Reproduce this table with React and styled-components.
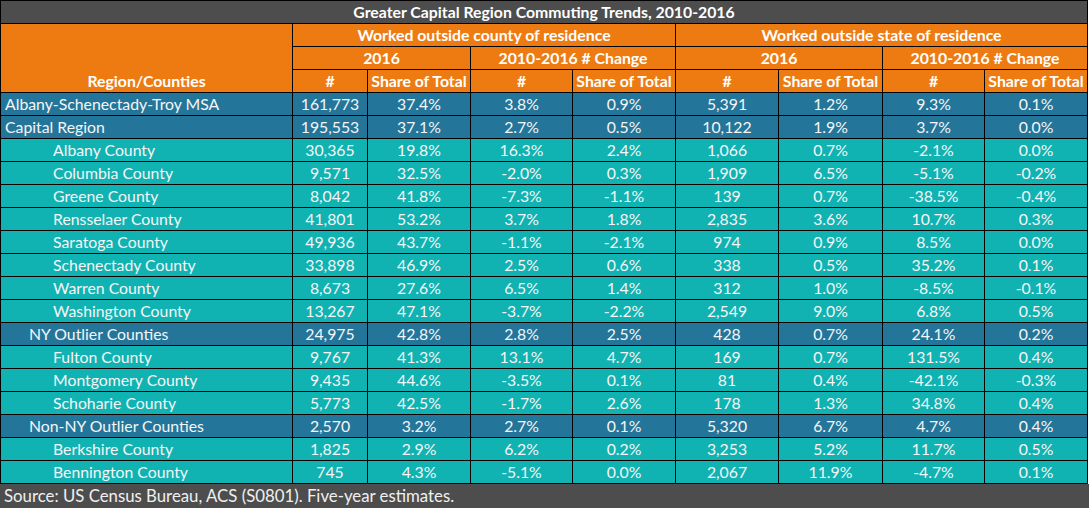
import { createGlobalStyle } from 'styled-components';
import styled from 'styled-components';

const GlobalStyle = createGlobalStyle`
  body {
    margin: 0;
    background: #ffffff;
    font-family: Lato, "Liberation Sans", sans-serif;
  }
`;

const colWidths = [292, 75, 103, 102, 103, 103, 104, 102, 103];

const rows = [
  ['Albany-Schenectady-Troy MSA', 0, '161,773', '37.4%', '3.8%', '0.9%', '5,391', '1.2%', '9.3%', '0.1%'],
  ['Capital Region', 0, '195,553', '37.1%', '2.7%', '0.5%', '10,122', '1.9%', '3.7%', '0.0%'],
  ['Albany County', 2, '30,365', '19.8%', '16.3%', '2.4%', '1,066', '0.7%', '-2.1%', '0.0%'],
  ['Columbia County', 2, '9,571', '32.5%', '-2.0%', '0.3%', '1,909', '6.5%', '-5.1%', '-0.2%'],
  ['Greene County', 2, '8,042', '41.8%', '-7.3%', '-1.1%', '139', '0.7%', '-38.5%', '-0.4%'],
  ['Rensselaer County', 2, '41,801', '53.2%', '3.7%', '1.8%', '2,835', '3.6%', '10.7%', '0.3%'],
  ['Saratoga County', 2, '49,936', '43.7%', '-1.1%', '-2.1%', '974', '0.9%', '8.5%', '0.0%'],
  ['Schenectady County', 2, '33,898', '46.9%', '2.5%', '0.6%', '338', '0.5%', '35.2%', '0.1%'],
  ['Warren County', 2, '8,673', '27.6%', '6.5%', '1.4%', '312', '1.0%', '-8.5%', '-0.1%'],
  ['Washington County', 2, '13,267', '47.1%', '-3.7%', '-2.2%', '2,549', '9.0%', '6.8%', '0.5%'],
  ['NY Outlier Counties', 1, '24,975', '42.8%', '2.8%', '2.5%', '428', '0.7%', '24.1%', '0.2%'],
  ['Fulton County', 2, '9,767', '41.3%', '13.1%', '4.7%', '169', '0.7%', '131.5%', '0.4%'],
  ['Montgomery County', 2, '9,435', '44.6%', '-3.5%', '0.1%', '81', '0.4%', '-42.1%', '-0.3%'],
  ['Schoharie County', 2, '5,773', '42.5%', '-1.7%', '2.6%', '178', '1.3%', '34.8%', '0.4%'],
  ['Non-NY Outlier Counties', 1, '2,570', '3.2%', '2.7%', '0.1%', '5,320', '6.7%', '4.7%', '0.4%'],
  ['Berkshire County', 2, '1,825', '2.9%', '6.2%', '0.2%', '3,253', '5.2%', '11.7%', '0.5%'],
  ['Bennington County', 2, '745', '4.3%', '-5.1%', '0.0%', '2,067', '11.9%', '-4.7%', '0.1%'],
];

const indents = [4, 28, 52];

function App() {
  return (
    <Page>
      <GlobalStyle />
      <Table>
        <colgroup>
          {colWidths.map((w, i) => <col key={i} style={{ width: w }} />)}
        </colgroup>
        <thead>
          <tr>
            <Title colSpan={9}>Greater Capital Region Commuting Trends, 2010-2016</Title>
          </tr>
          <tr>
            <Head rowSpan={3} $bottom>Region/Counties</Head>
            <Head colSpan={4}>Worked outside county of residence</Head>
            <Head colSpan={4}>Worked outside state of residence</Head>
          </tr>
          <tr>
            <Head colSpan={2}>2016</Head>
            <Head colSpan={2}>2010-2016 # Change</Head>
            <Head colSpan={2}>2016</Head>
            <Head colSpan={2}>2010-2016 # Change</Head>
          </tr>
          <tr>
            {[0, 1, 2, 3].map(i => [
              <Head key={'n' + i}>#</Head>,
              <Head key={'s' + i}>Share of Total</Head>,
            ])}
          </tr>
        </thead>
        <tbody>
          {rows.map(([name, level, ...values]) => (
            <Row key={name} $dark={level < 2}>
              <NameCell style={{ paddingLeft: indents[level] }}>{name}</NameCell>
              {values.map((v, i) => <Cell key={i}>{v}</Cell>)}
            </Row>
          ))}
        </tbody>
      </Table>
      <Footer>Source: US Census Bureau, ACS (S0801). Five-year estimates.</Footer>
    </Page>
  );
}

export default App;

const Page = styled.div`
  width: 1089px;
  height: 508px;
  display: flex;
  flex-direction: column;
  overflow: hidden;
`;

const Table = styled.table`
  width: 1088px;
  table-layout: fixed;
  border-collapse: collapse;
  font-size: 15.8px;
  color: #f6f6f6;
`;

const Title = styled.th`
  height: 22px;
  padding: 0;
  background: #4d4d4d;
  border: 1px solid #000;
  font-weight: 700;
  text-align: center;
  line-height: 1;
  color: #ffffff;
`;

const Head = styled.th`
  height: 22px;
  padding: 0;
  background: #ee7b12;
  border: 1px solid #000;
  font-weight: 700;
  text-align: center;
  vertical-align: ${p => (p.$bottom ? 'bottom' : 'middle')};
  padding-bottom: ${p => (p.$bottom ? '3px' : '0')};
  line-height: 1;
  color: #ffffff;
  white-space: nowrap;
`;

const Row = styled.tr`
  background: ${p => (p.$dark ? '#24759a' : '#10b2b2')};
`;

const Cell = styled.td`
  height: 22px;
  padding: 0;
  border: 1px solid #000;
  text-align: center;
  line-height: 1;
  white-space: nowrap;
`;

const NameCell = styled(Cell)`
  text-align: left;
`;

const Footer = styled.div`
  flex: 1;
  display: flex;
  align-items: center;
  background: #4d4d4d;
  color: #f0f0f0;
  font-size: 16.8px;
  padding: 0 4px 1px;
`;
